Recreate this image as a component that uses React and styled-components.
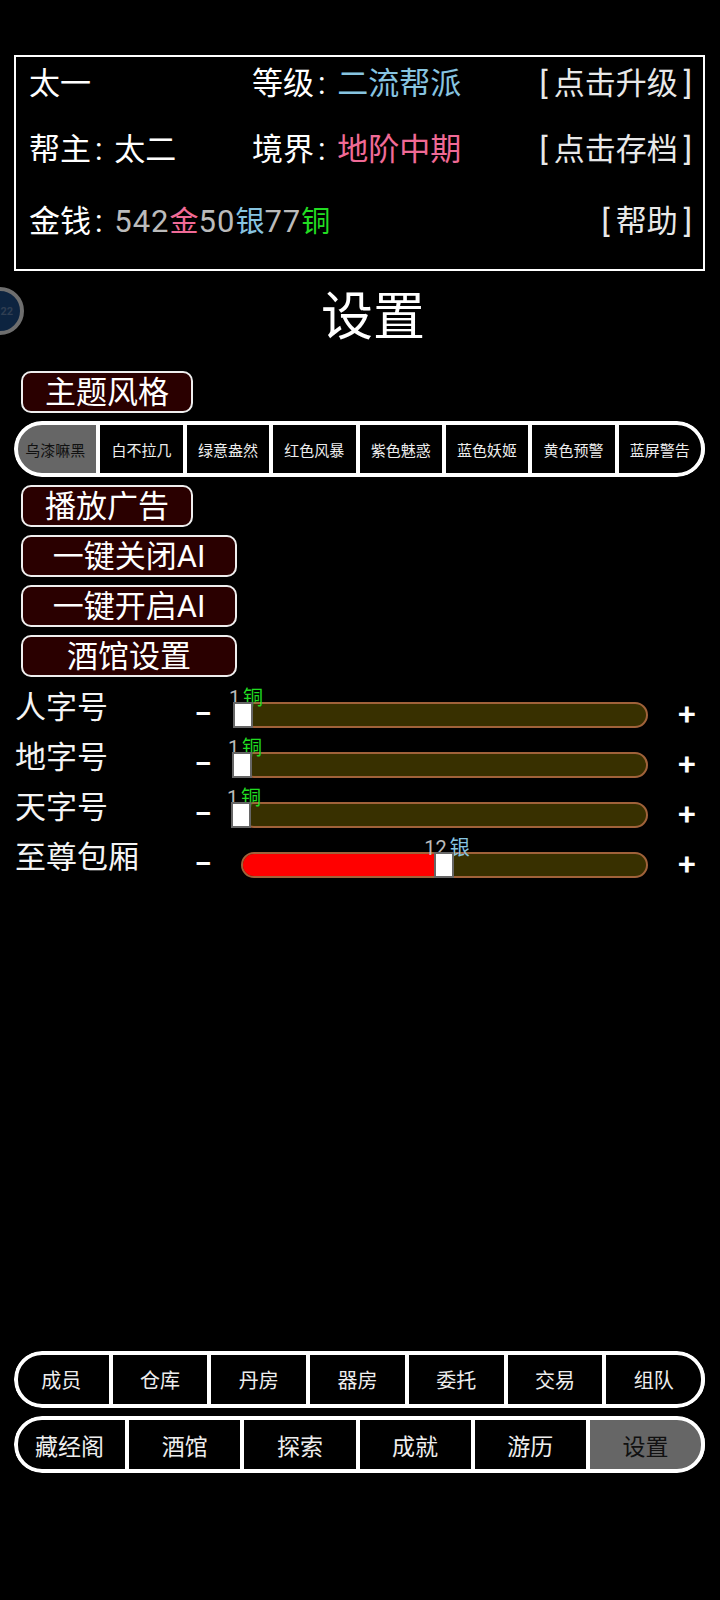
import styled, { createGlobalStyle } from "styled-components"

const GlobalStyle = createGlobalStyle`
*{box-sizing:border-box;}
html,body{margin:0;padding:0;background:#000;}
body{font-family:Roboto,"Noto Sans CJK SC",sans-serif;color:#fff;}
`

const Page = styled.div`
position:relative;
width:720px;
height:1600px;
padding:55px 15px 127px 14px;
display:flex;
flex-direction:column;
overflow:hidden;
background:#000;
`

const Header = styled.div`
height:216px;
border:2px solid #fff;
padding:7px 11px 0 13px;
`

const HeaderRow = styled.div`
display:flex;
align-items:center;
height:40px;
margin-top:${props => props.$top || 0}px;
font-size:31px;
line-height:40px;
white-space:nowrap;
`

const Name = styled.div`
width:223px;
`

const Grade = styled.div`
flex:1;
`

const Link = styled.div`
color:#e8e8e8;
`

const Bracket = styled.span`
margin:${props => props.$open ? "0 6px 0 0" : "0 0 0 6px"};
`

const Colon = styled.span`
margin:0 4px;
`

const Tone = styled.span`
color:${props => props.$color};
`

const Coin = styled(Tone)`
font-size:29px;
`

const Digits = styled.span`
color:#bbb;
letter-spacing:1px;
`

const Badge = styled.div`
position:absolute;
left:-24px;
top:287px;
width:48px;
height:48px;
border-radius:50%;
border:4px solid #6e6e6e;
background:#0d2440;
color:#2f3e52;
font-size:11px;
font-weight:700;
display:flex;
align-items:center;
justify-content:flex-end;
padding-right:7px;
`

const Title = styled.h1`
margin:17px 0 0 0;
padding-left:27px;
height:60px;
font-size:52px;
line-height:60px;
font-weight:400;
text-align:center;
`

const Stack = styled.div`
margin-top:23px;
display:flex;
flex-direction:column;
gap:8px;
`

const Button = styled.div`
margin-left:7px;
width:${props => props.$wide ? 216 : 172}px;
height:42px;
border:2px solid #eee;
border-radius:10px;
background:#2a0000;
font-size:31px;
line-height:40px;
text-align:center;
`

const Bar = styled.div`
position:relative;
display:flex;
height:${props => props.$height}px;
border-radius:28px;
overflow:hidden;
&::after{
  content:"";
  position:absolute;
  inset:0;
  border:4px solid #fff;
  border-radius:28px;
  pointer-events:none;
}
`

const BarItem = styled.div`
flex:1;
min-width:0;
display:flex;
align-items:center;
justify-content:center;
font-size:${props => props.$size}px;
background:${props => props.$active ? "#666" : "#000"};
color:${props => props.$active ? "#111" : "#eee"};
border-right:4px solid #fff;
`

const BottomNav = styled(Stack)`
margin-top:auto;
`

const Sliders = styled.div`
margin-top:13px;
padding-left:2px;
`

const SliderRow = styled.div`
display:flex;
align-items:center;
height:50px;
`

const SliderLabel = styled.div`
width:172px;
font-size:31px;
line-height:40px;
margin-bottom:14px;
margin-left:-1px;
color:#f4f4f4;
flex-shrink:0;
`

const Step = styled.div`
width:${props => props.$width}px;
margin-left:${props => props.$gap || 0}px;
margin-bottom:2px;
font-size:32px;
font-weight:500;
line-height:40px;
text-align:center;
flex-shrink:0;
`

const SliderBox = styled.div`
position:relative;
width:407px;
height:26px;
margin-left:22px;
flex-shrink:0;
`

const Track = styled.div`
height:100%;
border:2px solid #a0623a;
border-radius:13px;
background:#383000;
overflow:hidden;
`

const Fill = styled.div`
height:100%;
width:${props => props.$width}px;
background:#f00;
`

const Thumb = styled.div`
position:absolute;
top:0;
left:${props => props.$left}px;
width:20px;
height:26px;
background:#fff;
border:2px solid #666;
`

const Value = styled.div`
position:absolute;
top:-16px;
left:${props => props.$left + 13}px;
transform:translateX(-50%);
font-size:20px;
line-height:24px;
word-spacing:-2px;
white-space:nowrap;
color:#bbb;
`

const sliders = [
  { label: "人字号", left: -8, amount: "1", unit: "铜", color: "#22dd22" },
  { label: "地字号", left: -9, amount: "1", unit: "铜", color: "#22dd22" },
  { label: "天字号", left: -10, amount: "1", unit: "铜", color: "#22dd22" },
  { label: "至尊包厢", left: 193, amount: "12", unit: "银", color: "#87c4e0" },
]

const themes = ["乌漆嘛黑", "白不拉几", "绿意盎然", "红色风暴", "紫色魅惑", "蓝色妖姬", "黄色预警", "蓝屏警告"]
const navTop = ["成员", "仓库", "丹房", "器房", "委托", "交易", "组队"]
const navBottom = ["藏经阁", "酒馆", "探索", "成就", "游历", "设置"]

const App = () => {
  return (
    <Page>
      <GlobalStyle />
      <Header>
        <HeaderRow>
          <Name>太一</Name>
          <Grade>等级<Colon>:</Colon> <Tone $color="#87c4e0">二流帮派</Tone></Grade>
          <Link><Bracket $open>[</Bracket>点击升级<Bracket>]</Bracket></Link>
        </HeaderRow>
        <HeaderRow $top={26}>
          <Name>帮主<Colon>:</Colon> 太二</Name>
          <Grade>境界<Colon>:</Colon> <Tone $color="#f06a96">地阶中期</Tone></Grade>
          <Link><Bracket $open>[</Bracket>点击存档<Bracket>]</Bracket></Link>
        </HeaderRow>
        <HeaderRow $top={32}>
          <Grade>
            金钱<Colon>:</Colon> <Digits>542</Digits><Coin $color="#f06a96">金</Coin>
            <Digits>50</Digits><Coin $color="#87c4e0">银</Coin>
            <Digits>77</Digits><Coin $color="#22dd22">铜</Coin>
          </Grade>
          <Link><Bracket $open>[</Bracket>帮助<Bracket>]</Bracket></Link>
        </HeaderRow>
      </Header>

      <Badge>22</Badge>
      <Title>设置</Title>

      <Stack>
        <Button>主题风格</Button>
        <Bar $height={56}>
          {themes.map((t, i) => <BarItem key={t} $size={15} $active={i === 0}>{t}</BarItem>)}
        </Bar>
        <Button>播放广告</Button>
        <Button $wide>一键关闭AI</Button>
        <Button $wide>一键开启AI</Button>
        <Button $wide>酒馆设置</Button>
      </Stack>

      <Sliders>
        {sliders.map(s => (
          <SliderRow key={s.label}>
            <SliderLabel>{s.label}</SliderLabel>
            <Step $width={32}>−</Step>
            <SliderBox>
              <Track>{s.left > 0 && <Fill $width={s.left} />}</Track>
              <Value $left={s.left}>{s.amount} <Tone $color={s.color}>{s.unit}</Tone></Value>
              <Thumb $left={s.left} />
            </SliderBox>
            <Step $width={56} $gap={11}>+</Step>
          </SliderRow>
        ))}
      </Sliders>

      <BottomNav>
        <Bar $height={57}>
          {navTop.map(t => <BarItem key={t} $size={20}>{t}</BarItem>)}
        </Bar>
        <Bar $height={57}>
          {navBottom.map(t => <BarItem key={t} $size={23} $active={t === "设置"}>{t}</BarItem>)}
        </Bar>
      </BottomNav>
    </Page>
  )
}

export default App
